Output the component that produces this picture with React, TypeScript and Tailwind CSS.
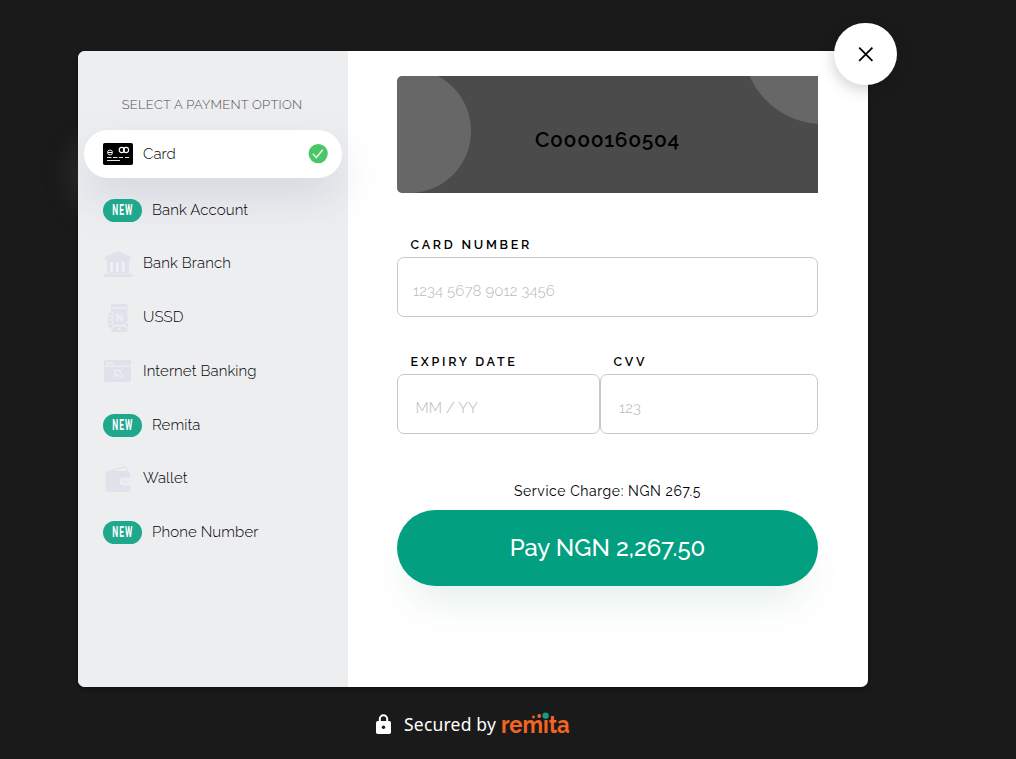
import type { ReactNode } from "react";

function NewBadge() {
  return (
    <span className="flex h-[23px] w-[39px] shrink-0 items-center justify-center rounded-full bg-[#1fa88c] text-white">
      <span className="-mx-2 inline-block origin-center scale-x-[0.56] font-['Roboto',sans-serif] text-[15px] leading-none font-bold tracking-[1.900px]">NEW</span>
    </span>
  );
}

function CardIcon() {
  return (
    <svg width="30" height="22" viewBox="0 0 30 22" className="shrink-0">
      <rect width="30" height="22" rx="1.8" fill="#000" />
      <g fill="none" stroke="#fff">
        <circle cx="18.800" cy="7" r="2.600" strokeWidth="1.100" />
        <circle cx="23" cy="7" r="2.600" strokeWidth="1.100" />
        <circle cx="7" cy="9.500" r="2.500" strokeWidth="0.900" />
        <path d="M5 9.500h4" strokeWidth="1.100" />
        <path d="M4 14.500h4.500M10 14.500h4.500M16 14.500h4M22 14.500h4M4 17.500h13" strokeWidth="1" opacity=".9" />
      </g>
    </svg>
  );
}

function BankIcon() {
  return (
    <svg width="30" height="28" viewBox="0 0 30 28" className="shrink-0" fill="#dfe2eb">
      <path d="M15 1 28 7V9.500H2V7ZM4 9.500h22v13.500H4ZM2 23.500h26q1.500 .500 1.500 3.500H.500Q.500 24 2 23.500Z" />
      <path d="M7.500 12h2.500v10H7.500ZM13 12h2.500v10H13ZM19 12h2.500v10H19Z" fill="#f0f1f3" />
    </svg>
  );
}

function UssdIcon() {
  return (
    <svg width="30" height="30" viewBox="0 0 30 30" className="shrink-0">
      <rect x="8" y="1" width="16.500" height="28" rx="2" fill="#dfe2eb" />
      <path d="M9 4.800h14.500M10 22.600h13" stroke="#f0f1f3" strokeWidth="1.300" />
      <circle cx="16.500" cy="25.800" r="1" fill="#f0f1f3" />
      <g fill="#dfe2eb" stroke="#f0f1f3" strokeWidth=".8">
        <rect x="4.500" y="9" width="6" height="4.300" rx="2" />
        <rect x="3.500" y="13" width="6.500" height="4.300" rx="2" />
        <rect x="3.500" y="17" width="6.500" height="4.300" rx="2" />
        <rect x="4.500" y="21" width="6" height="4.300" rx="2" />
        <circle cx="24" cy="22" r="2.300" />
      </g>
      <path d="M14 18.500v-8l5 8v-8M12.800 13.300h7.500M12.800 15.700h7.500" fill="none" stroke="#f0f1f3" strokeWidth="1" />
    </svg>
  );
}

function BrowserIcon() {
  return (
    <svg width="30" height="22" viewBox="0 0 30 22" className="shrink-0">
      <path d="M2.500 0h24Q28 0 28 1.500V5.500H1V1.500Q1 0 2.500 0ZM1 6.700h27V20.500q0 1.500-1.500 1.500h-24Q1 22 1 20.500Z" fill="#dfe2eb" />
      <g fill="none" stroke="#f3f4f6" strokeWidth="1">
        <circle cx="4.700" cy="3" r="1.100" />
        <circle cx="8.600" cy="3" r="1.100" />
        <path d="M11.800 10 18 10.500 16.500 12.300 19.800 15.800 17.800 17.900 14.500 14.300 12.300 16Z" strokeLinejoin="round" />
      </g>
    </svg>
  );
}

function WalletIcon() {
  return (
    <svg width="30" height="26" viewBox="0 0 30 26" className="shrink-0">
      <path d="M5 5.500 21 1.200q1.800-.500 2.300 1.300L24 5.500" fill="none" stroke="#dfe2eb" strokeWidth="1.300" />
      <rect x="2.500" y="5" width="24.500" height="21" rx="2" fill="#dfe2eb" />
      <rect x="17" y="12" width="11.500" height="7" rx="3.500" fill="#e9ebef" stroke="#f0f1f3" />
      <circle cx="21" cy="15.500" r="1" fill="#dfe2eb" />
    </svg>
  );
}

const options: { label: string; icon?: ReactNode }[] = [
  { label: "Bank Account" },
  { label: "Bank Branch", icon: <BankIcon /> },
  { label: "USSD", icon: <UssdIcon /> },
  { label: "Internet Banking", icon: <BrowserIcon /> },
  { label: "Remita" },
  { label: "Wallet", icon: <WalletIcon /> },
  { label: "Phone Number" },
];

function Sidebar() {
  return (
    <aside className="relative z-10 w-[270px] shrink-0 rounded-l-[7px] bg-[#edeef0] px-[6px] pt-[44px]">
      <h2 className="pr-1 pl-0.5 text-center text-[13px] leading-[20px] font-[350] tracking-[0.250px] text-[#505154]">SELECT A PAYMENT OPTION</h2>
      <div className="mt-[15px] flex h-12 items-center rounded-full bg-white pr-[14px] pl-[19px] shadow-[0_20px_40px_rgba(166,178,194,0.35)]">
        <CardIcon />
        <span className="ml-[10px] text-[15px] leading-6 font-[350] tracking-[0.100px] text-black">Card</span>
        <svg width="20" height="20" viewBox="0 0 20 20" className="ml-auto">
          <circle cx="10.200" cy="9.600" r="9.600" fill="#49c768" />
          <path d="m4.800 9.800 3.500 3.700 6.500-7.800" fill="none" stroke="#e6f7e9" strokeWidth="1.500" />
        </svg>
      </div>
      <ul className="mt-[4.700px]">
        {options.map(({ label, icon }) => (
          <li key={label} className="flex h-[53.750px] items-center pl-[19px] text-[15px] leading-6 font-[350] tracking-[0.100px] text-black">
            <span className="flex pt-px">{icon ?? <NewBadge />}</span>
            <span className="ml-[10px]">{label}</span>
          </li>
        ))}
      </ul>
    </aside>
  );
}

function Field({ label, placeholder, className, inputClass }: { label: string; placeholder: string; className: string; inputClass: string }) {
  return (
    <label className={className}>
      <span className="block h-[26px] pt-0.5 pl-[13.500px] text-[12.500px] leading-[24px] font-semibold tracking-[2.750px] text-black">{label}</span>
      <input
        placeholder={placeholder}
        className={"block h-[60px] w-full rounded-[7px] border border-[#c8c8c8] bg-white pt-2 text-[15px] font-light tracking-[0.100px] text-black placeholder:text-[#b8b8b8] " + inputClass}
      />
    </label>
  );
}

export default function App() {
  return (
    <div className="h-[759px] w-[1016px] overflow-hidden bg-[#1a1a1a] pt-[51px] pl-[78px] font-['Raleway','Lato',sans-serif]">
      <main className="relative flex h-[636px] w-[790px] rounded-[7px] bg-white shadow-[0_2px_4px_rgba(0,0,0,0.35)]">
        <Sidebar />
        <section className="flex-1 pt-[25px] pr-[50px] pl-[49px]">
          <div className="flex h-[117px] items-center justify-center rounded-l-[5px] bg-[#4b4b4b] bg-[radial-gradient(circle_at_12px_55px,#676767_61.500px,transparent_62.500px),radial-gradient(circle_at_426px_-32px,#676767_79.500px,transparent_80.500px)]">
            <span className="pt-[10px] text-[21px] leading-[26px] font-[650] tracking-[0.650px] text-black">C0000160504</span>
          </div>
          <Field label="CARD NUMBER" placeholder="1234 5678 9012 3456" className="mt-[38px] block" inputClass="pl-[15px]" />
          <div className="mt-[31px] flex">
            <Field label="EXPIRY DATE" placeholder="MM / YY" className="w-[203px]" inputClass="pl-[17.500px]" />
            <Field label="CVV" placeholder="123" className="flex-1" inputClass="pl-[18px]" />
          </div>
          <p className="mt-[47px] text-center text-[14px] leading-5 font-normal tracking-[0.580px] text-black">Service Charge: NGN 267.5</p>
          <button className="mt-[9px] h-[76px] w-full rounded-full bg-[#02a080] text-[24px] font-medium text-white shadow-[0_25px_40px_-14px_rgba(0,105,80,0.13)]">Pay NGN 2,267.50</button>
        </section>
        <button aria-label="Close" className="absolute top-[-28px] left-[756px] z-20 flex h-[62px] w-[63px] items-center justify-center rounded-full bg-white shadow-[0_4px_16px_rgba(0,0,0,0.2)]">
          <svg width="16" height="16" viewBox="0 0 16 16" stroke="#000" strokeWidth="1.800">
            <path d="m1.200 1.700 13.200 13.200M14.400 1.700l-13.200 13.200" />
          </svg>
        </button>
      </main>
      <footer className="mt-[23px] flex h-[28px] items-center pl-[298px]">
        <svg width="15" height="20" viewBox="0 0 15 20">
          <path d="M3.800 8V5a3.700 3.700 0 0 1 7.400 0v3" fill="none" stroke="#fff" strokeWidth="2" />
          <rect y="7" width="15" height="13" rx="1.800" fill="#fff" />
          <circle cx="7.500" cy="13.300" r="1.700" fill="#1a1a1a" />
        </svg>
        <span className="ml-[13px] w-[91px] font-['Noto_Sans',sans-serif] text-[17.500px] leading-7 font-[370] tracking-[0.200px] whitespace-nowrap text-white">Secured by</span>
        <span className="relative ml-[6px] pt-px">
          <span className="inline-block origin-left scale-x-[0.880] text-[25px] leading-7 font-bold text-[#f26522]">remita</span>
          <svg width="36" height="10" viewBox="0 0 36 10" className="absolute top-[2px] left-[28px]">
            <circle cx="4.500" cy="6" r="1.400" fill="#f26522" />
            <circle cx="10.200" cy="5" r="1.900" fill="#f26522" />
            <circle cx="16.600" cy="4.600" r="3.200" fill="#179b84" />
          </svg>
        </span>
      </footer>
    </div>
  );
}
